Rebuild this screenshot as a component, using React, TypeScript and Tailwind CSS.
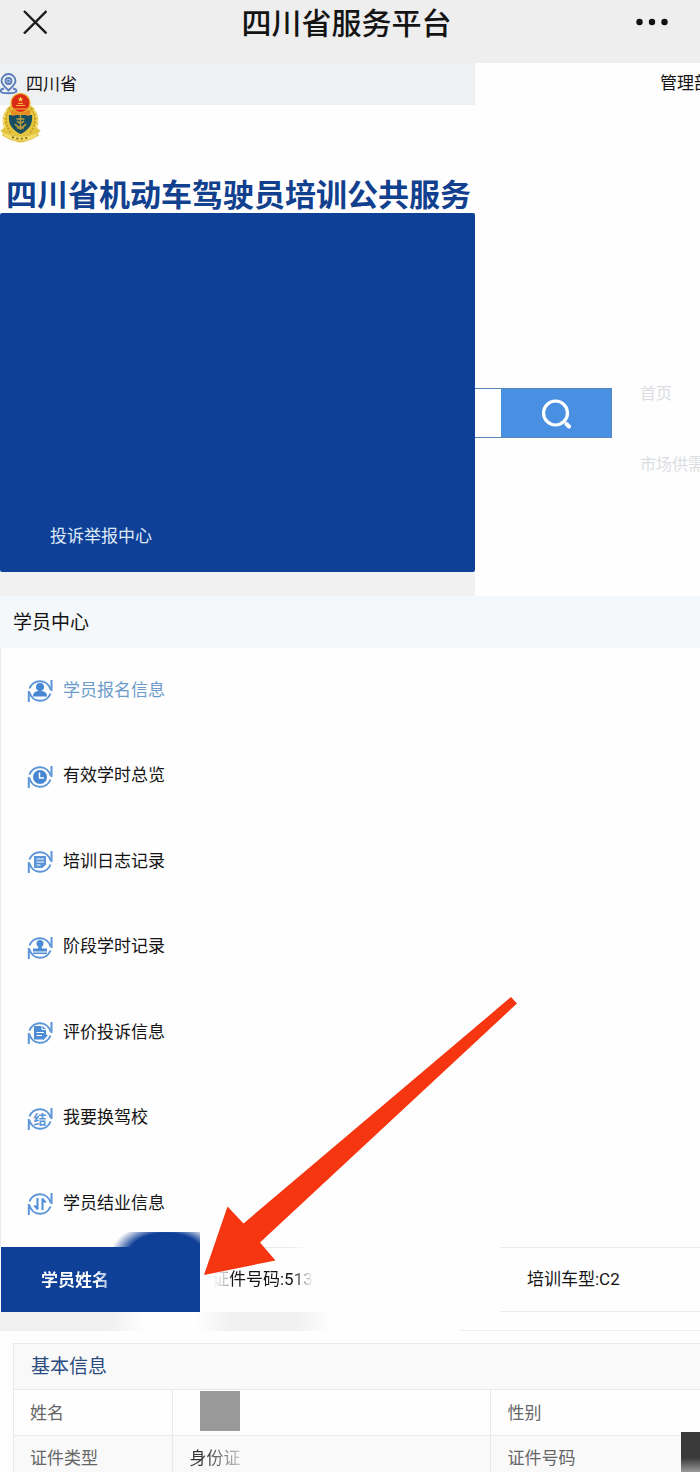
import type { ReactNode } from "react";
import clsx from "clsx";

const MENU_ITEMS: { label: string; icon: ReactNode; active?: boolean }[] = [
  { label: "学员报名信息", icon: <PersonGlyph />, active: true },
  { label: "有效学时总览", icon: <ClockGlyph /> },
  { label: "培训日志记录", icon: <LogGlyph /> },
  { label: "阶段学时记录", icon: <StampGlyph /> },
  { label: "评价投诉信息", icon: <ReviewGlyph /> },
  { label: "我要换驾校", icon: <TransferGlyph /> },
  { label: "学员结业信息", icon: <ArrowsGlyph /> },
];

export default function App() {
  return (
    <div className="overflow-hidden bg-[#fefefe] font-[Roboto,'Noto_Sans_CJK_SC',sans-serif] text-[17px] leading-6 text-[#141414]">
      <TitleBar />
      <Banner />
      <main>
        <h2 className="bg-[#f5f8fa] px-[13px] pt-[15px] pb-[13px] text-[19px]">学员中心</h2>
        <StudentMenu />
        <StudentSummary />
        <BasicInfo />
      </main>
    </div>
  );
}

function TitleBar() {
  return (
    <header className="flex h-[63px] items-start justify-between bg-[#eeeeee] pt-1 pr-8 pl-[23px]">
      <button aria-label="关闭" className="flex h-9 w-[34px] items-center">
        <svg width="24" height="24" viewBox="0 0 24 24" fill="none" stroke="#1c1c1c" strokeWidth="2.4">
          <path d="M1 1 23.500 23.500M23.500 1 1 23.500" />
        </svg>
      </button>
      <h1 className="text-[30px] leading-10 font-medium">四川省服务平台</h1>
      <button aria-label="更多" className="flex h-9 items-center">
        <svg width="32" height="8" viewBox="0 0 32 8" fill="#111">
          <circle cx="3.500" cy="4" r="3.200" />
          <circle cx="16" cy="4" r="3.200" />
          <circle cx="28.500" cy="4" r="3.200" />
        </svg>
      </button>
    </header>
  );
}

function Banner() {
  return (
    <div className="flex">
      <div className="w-[475px] shrink-0">
        <div className="flex h-[42px] items-center bg-[#eff0f2]">
          <PinIcon />
          <span className="pl-2">四川省</span>
        </div>
        <div className="-mt-3 flex h-[120px] flex-col justify-between">
          <Emblem />
          <p className="pl-[6px] text-[31px] leading-[34px] font-bold whitespace-nowrap text-[#11408f]">
            四川省机动车驾驶员培训公共服务
          </p>
        </div>
        <div className="flex h-[359px] items-end rounded-xs bg-[#0f4098] pb-6 pl-[50px]">
          <a href="#complaints" className="text-[#dfeaf8]">
            投诉举报中心
          </a>
        </div>
        <div className="h-6 bg-[#f1f1f2]" />
      </div>

      <div className="flex min-w-0 flex-1 flex-col overflow-hidden whitespace-nowrap">
        <a href="#departments" className="pt-2 pl-[185px]">
          管理部门
        </a>
        <div className="mt-[286px] flex">
          <form className="mt-[7px] flex h-[50px] w-[137px] shrink-0 border border-l-0 border-[#5a86bf]">
            <input aria-label="搜索" className="w-[26px] bg-white outline-none" />
            <button type="button" aria-label="搜索" className="flex flex-1 items-center justify-center bg-[#4a90e2]">
              <svg width="32" height="32" viewBox="0 0 32 32" fill="none" stroke="#fff" strokeLinecap="round">
                <circle cx="15.500" cy="16" r="12" strokeWidth="3.200" />
                <path d="m26.500 27 2.500 2.500" strokeWidth="4" />
              </svg>
            </button>
          </form>
          <nav className="flex flex-col gap-[47px] pt-px pl-7 text-base text-[#dcdde1]">
            <a href="#home">首页</a>
            <a href="#market">市场供需</a>
          </nav>
        </div>
      </div>
    </div>
  );
}

function StudentMenu() {
  return (
    <ul className="flex min-h-[599px] flex-col justify-between border-l border-[#ececee] py-[30px]">
      {MENU_ITEMS.map((item) => (
        <li key={item.label}>
          <a
            href="#student"
            className={clsx("flex items-center gap-[10px] pl-[26px]", item.active && "text-[#6d9cca]")}
          >
            <svg width="26" height="26" viewBox="0 0 26 26" className="shrink-0">
              <g fill="none" stroke="#5b94d8" strokeWidth="2">
                <path d="M2.500 10.500A11 11 0 0 1 23.500 11.500" />
                <path d="M24.500 2v11" />
                <path d="M23.500 15.500A11 11 0 0 1 2.500 14.500" />
                <path d="M1.800 24V13" />
              </g>
              {item.icon}
            </svg>
            <span className="-mt-[3px]">{item.label}</span>
          </a>
        </li>
      ))}
    </ul>
  );
}

function StudentSummary() {
  return (
    <section className="relative">
      <div className="flex h-[65px]">
        <div className="relative ml-px flex w-[199px] shrink-0 items-center bg-[#0f4098] pl-10 font-bold">
          <span className="bg-[linear-gradient(90deg,#fff_80%,#9db4d8)] bg-clip-text text-transparent">学员姓名</span>
          <div className="absolute -top-[15px] right-0 h-4 w-[90px] bg-[radial-gradient(ellipse_56px_34px_at_56px_24px,#0f4098_68%,transparent)]" />
        </div>
        <div className="w-[300px]">
          <div className="ml-[60px] h-px w-[50px] bg-[linear-gradient(90deg,#ebebeb_60%,transparent)]" />
          <div className="flex h-[62px] items-center pl-3">
            <span className="bg-[linear-gradient(90deg,#fff,#bbb_14%,#141414_20%,#141414_80%,#fff)] bg-clip-text text-transparent">
              证件号码:513
            </span>
          </div>
        </div>
        <div className="flex flex-1 items-center border-y border-[#ebebeb] pb-0.5 pl-[27px]">培训车型:C2</div>
      </div>
      <div className="flex h-[19px]">
        <div className="w-[145px] bg-[linear-gradient(90deg,#f0f0f0_75%,transparent)]" />
        <div className="ml-[50px] w-[135px] bg-[linear-gradient(90deg,transparent,#f1f1f1_25%,#f1f1f1_75%,transparent)]" />
        <div className="ml-[130px] flex-1 border-b border-[#efefef]" />
      </div>
      <svg
        width="313"
        height="278"
        viewBox="204 997 313 278"
        className="pointer-events-none absolute -top-[250px] left-[204px]"
        fill="#f63511"
      >
        <path d="M204 1275 227.500 1206.500 243.500 1223.500 511 997 517 1003.500 260 1242.500 275.500 1260.500Z" />
      </svg>
    </section>
  );
}

function BasicInfo() {
  return (
    <section className="mt-3 ml-[13px] border-t border-l border-[#e9e9eb]">
      <h3 className="bg-[#f9f9fa] py-[10px] pl-[17px] text-[19px] leading-[25px] text-[#2a4a80]">基本信息</h3>
      <table className="w-full table-fixed border-collapse text-left text-[#666]">
        <colgroup>
          <col className="w-[158px]" />
          <col className="w-[318px]" />
          <col className="w-[148px]" />
          <col />
        </colgroup>
        <tbody>
          <tr className="h-[46px] border-t border-[#e9e9eb]">
            <th className="border-r border-[#e9e9eb] pl-4 font-normal">姓名</th>
            <td className="border-r border-[#e9e9eb] pt-px pl-[27px] align-top">
              <div className="size-10 bg-[#999]" />
            </td>
            <th className="pl-[17px] font-normal">性别</th>
            <td />
          </tr>
          <tr className="border-t border-[#e9e9eb] bg-[#f9f9fa]">
            <th className="border-r border-[#e9e9eb] pt-[10px] pb-0.5 pl-4 font-normal">证件类型</th>
            <td className="border-r border-[#e9e9eb] pt-[10px] pb-0.5 pl-[17px]">
              <span className="bg-[linear-gradient(90deg,#333_30%,#ccc)] bg-clip-text text-transparent">身份证</span>
            </td>
            <th className="pt-[10px] pb-0.5 pl-[17px] font-normal">证件号码</th>
            <td className="relative">
              <div className="absolute right-0 bottom-0 h-10 w-[19px] bg-[linear-gradient(#3a3a3a_65%,#999)]" />
            </td>
          </tr>
        </tbody>
      </table>
    </section>
  );
}

function PinIcon() {
  return (
    <svg width="18" height="22" viewBox="0 0 18 22" fill="none" stroke="#5a7dbc" strokeWidth="1.8">
      <path d="M8.500 17.500C4.500 13.500 1.500 11 1.500 8a7 7 0 0 1 14 0c0 3-3 5.500-7 9.500Z" />
      <circle cx="8.500" cy="8" r="3" />
      <circle cx="8.500" cy="8" r=".6" />
      <path d="M4 15.500c-2.500.5-3.500 1.500-3.500 2.500 0 3 16 3 16 0 0-1-1-2-3.500-2.500" />
    </svg>
  );
}

function Emblem() {
  return (
    <svg width="41" height="50" viewBox="0 0 41 50" role="img" aria-label="徽章">
      <path
        d="M11 12C3 17 1 27 4 35l-4 3 4 1-2 4 8 1 5 4q6 3 11 0l5-4 8-1-2-4 4-1-4-3c3-8 1-18-7-23Z"
        fill="#e5c53e"
      />
      <path d="M10 15c-6 8-5 17 1 25M31 15c6 8 5 17-1 25" fill="none" stroke="#c39a26" strokeWidth="1.500" strokeDasharray="2 1.500" />
      <path d="M7 17c-5 8-4 14-1 19M34 17c5 8 4 14 1 19" fill="none" stroke="#f8e98a" strokeWidth="1.500" strokeDasharray="3 2" />
      <path d="M9 22h23c1 9-3 15-11.500 19C12 37 8 31 9 22Z" fill="#174f60" />
      <path d="M20.500 22v15M16.500 26h8M15 31q5.500 7 11 0M17 28q3.500 4 7 0M17 35h7" fill="none" stroke="#b99b3c" strokeWidth="1.500" />
      <path d="M10 17h21l-2 6q-8.500-3-17 0Z" fill="#e38c25" />
      <circle cx="20.500" cy="10" r="9.500" fill="#dc2a18" stroke="#e8ae2d" strokeWidth="1.200" />
      <path d="m20.500 3.500.8 2 2 .1-1.600 1.200.6 2-1.800-1.100-1.800 1.100.6-2-1.600-1.200 2-.1Z" fill="#fbd94e" />
      <path d="M16 12.500h9M18 10.500h5M14 16h13" stroke="#f4b637" strokeWidth="1.200" />
      <path d="M2 38c10 7 27 7 37 0l-2 5c-9 7-24 7-33 0Z" fill="#f3dc65" stroke="#d9b740" strokeWidth=".7" />
      <path d="M12 44q8.500 3.500 17 0" fill="none" stroke="#80631b" strokeWidth="1.600" strokeDasharray="2 2.500" />
    </svg>
  );
}

function PersonGlyph() {
  return (
    <g fill="#4686d2">
      <circle cx="13" cy="9" r="4" />
      <path d="M6 18.500c0-4 2.500-5.500 7-5.500s7 1.500 7 5.500Z" />
    </g>
  );
}

function ClockGlyph() {
  return (
    <>
      <circle cx="13" cy="13" r="7" fill="#4686d2" />
      <path d="M12.500 8.500V14h4.500" fill="none" stroke="#fff" strokeWidth="1.500" />
    </>
  );
}

function LogGlyph() {
  return (
    <>
      <path d="M7 7h12v8.500L15.500 19H7Z" fill="#5b94d8" />
      <path d="M9.500 10h7.500M9.500 13h7.500M9.500 16h4" stroke="#fff" strokeWidth="1.100" />
    </>
  );
}

function StampGlyph() {
  return (
    <g fill="#4e8cd6">
      <circle cx="13" cy="8.500" r="3.500" />
      <path d="M11.500 10h3l.5 3.500h5v3H6v-3h5ZM6 17.500h14V19H6Z" />
    </g>
  );
}

function ReviewGlyph() {
  return (
    <>
      <path d="M7 6h8.500L19 9v6l-4 4.500H7Z" fill="#4e8cd6" />
      <path d="M9.500 12.500h7.500M9.500 15.500h5.500M15 6v3.500h4" fill="none" stroke="#fff" strokeWidth="1" />
      <path d="m15.500 19.500 4.500-4.500" stroke="#4e8cd6" strokeWidth="1.800" />
    </>
  );
}

function TransferGlyph() {
  return (
    <text x="13" y="18" textAnchor="middle" fontSize="13" fontWeight="700" fill="#5b94d8">
      结
    </text>
  );
}

function ArrowsGlyph() {
  return (
    <g fill="none" stroke="#4e8cd6" strokeWidth="2">
      <path d="M10.500 7v11.500" />
      <path d="M15.500 19V7.500" />
      <path d="M10.500 19.500 6 14.500h4.500ZM15.500 6.500l4.500 5h-4.500Z" fill="#4e8cd6" stroke="none" />
    </g>
  );
}
